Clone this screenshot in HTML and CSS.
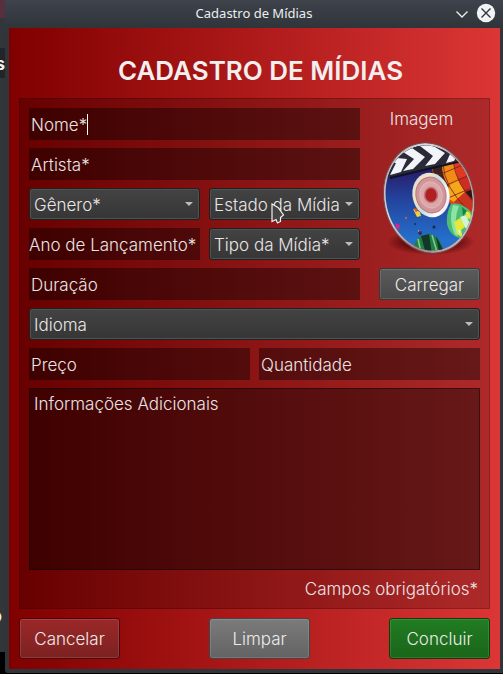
FILE: index.html
```html
<!DOCTYPE html>
<html lang="pt">
<head>
<meta charset="utf-8">
<title>Cadastro de Mídias</title>
<link rel="stylesheet" href="styles.css">
</head>
<body>
<div class="desktop" aria-hidden="true">
  <span class="behind behind-tab">s</span>
  <span class="behind behind-letter">o</span>
</div>
<div class="window">
  <header class="titlebar">
    <span class="caption">Cadastro de Mídias</span>
    <div class="window-controls">
      <button type="button" class="control" aria-label="Minimizar">
        <svg width="14" height="20" viewBox="0 0 14 20"><path d="M1.500 8.500L7 14L12.500 8.500" fill="none" stroke="#eceef0" stroke-width="1.300"/></svg>
      </button>
      <button type="button" class="control" aria-label="Fechar">
        <svg width="20" height="20" viewBox="0 0 20 20"><circle cx="10" cy="10" r="9.200" fill="#f2f3f4"/><path d="M5.500 5.500L14.500 14.500M14.500 5.500L5.500 14.500" fill="none" stroke="#30353a" stroke-width="1.400"/></svg>
      </button>
    </div>
  </header>
  <form class="content">
    <h1>CADASTRO DE MÍDIAS</h1>
    <section class="panel">
      <div class="top">
        <div class="fields">
          <div class="wide name">
            <input class="field" type="text" placeholder="Nome*" aria-label="Nome">
            <span class="caret"></span>
          </div>
          <input class="field wide" type="text" placeholder="Artista*" aria-label="Artista">
          <div class="combo"><select aria-label="Gênero"><option>Gênero*</option></select></div>
          <div class="combo">
            <select aria-label="Estado da Mídia"><option>Estado da Mídia*</option></select>
            <svg class="pointer" width="14" height="22" viewBox="0 0 14 22"><path d="M1 1V18.500L5 16.500L6.500 20L9.500 18.500V14.500L12.500 12L7 4.500Z" fill="#454545" stroke="#f0f0f0" stroke-width="1.200"/></svg>
          </div>
          <input class="field flush" type="text" placeholder="Ano de Lançamento*" aria-label="Ano de Lançamento">
          <div class="combo"><select aria-label="Tipo da Mídia"><option>Tipo da Mídia*</option></select></div>
          <input class="field wide" type="text" placeholder="Duração" aria-label="Duração">
        </div>
        <div class="cover">
          <span class="cover-label">Imagem</span>
          <svg class="disc" width="104" height="120" viewBox="0 0 104 120" role="img" aria-label="Disco">
            <defs>
              <linearGradient id="sky" x1="0" y1="0" x2="0" y2="1"><stop offset=".25" stop-color="#281a66"/><stop offset=".5" stop-color="#23429b"/><stop offset=".85" stop-color="#2470cc"/></linearGradient>
              <linearGradient id="rim" x1="0" y1="0" x2="1" y2="1"><stop offset="0" stop-color="#9b8a8e"/><stop offset=".3" stop-color="#ddd"/><stop offset=".6" stop-color="#a98388"/><stop offset="1" stop-color="#e5d5d5"/></linearGradient>
              <linearGradient id="hub" x1="0" y1="0" x2="1" y2="1"><stop offset="0" stop-color="#d5d5e5"/><stop offset=".3" stop-color="#f0e5c0"/><stop offset=".5" stop-color="#c3dde0"/><stop offset=".75" stop-color="#fff"/><stop offset="1" stop-color="#c7c6d4"/></linearGradient>
              <radialGradient id="shade"><stop offset=".5" stop-color="#400" stop-opacity=".8"/><stop offset="1" stop-color="#400" stop-opacity="0"/></radialGradient>
              <clipPath id="face"><ellipse cx="51" cy="60" rx="43" ry="53" transform="rotate(-12 51 60)"/></clipPath>
            </defs>
            <ellipse cx="53" cy="104" rx="44" ry="13" fill="url(#shade)"/>
            <ellipse cx="51" cy="60" rx="45" ry="55.500" transform="rotate(-12 51 60)" fill="url(#rim)" stroke="#76494d" stroke-width="1"/>
            <g clip-path="url(#face)">
              <path d="M0 0H104V120H0Z" fill="url(#sky)"/>
              <path d="M53 28L84 20L104 60V77Q82 74 68 62Q58 48 53 28Z" fill="#e34a1c"/>
              <path d="M54 28L64 26Q64 40 71 48L66 53Q56 42 54 28Z" fill="#3b2020"/>
              <path d="M64 26L75 23L80 41L71 48Q64 38 64 26Z" fill="#f28a16"/>
              <path d="M75 23L84 20L94 36L80 41Z" fill="#df3920"/>
              <path d="M71 48L80 41L87 54L76 64L68 59Z" fill="#f5a71b"/>
              <path d="M80 41L94 36L100 52L87 54Z" fill="#cc2c21"/>
              <path d="M87 54L100 49V65L91 60Z" fill="#231818"/>
              <path d="M76 64L87 54L99 66L98 74L84 70Z" fill="#c93320"/>
              <path d="M65 26Q66 49 90 72M75 23Q78 47 99 68M56 39L87 26M62 50L94 36M70 60L98 48" fill="none" stroke="#762017" stroke-width=".8"/>
              <path d="M73 66Q84 63 94 75Q97 89 85 101Q72 99 69 86Q68 75 73 66Z" fill="#4cbd72"/>
              <path d="M75 67Q70 82 77 97L80 98Q75 82 81 68Z" fill="#8be3a5"/>
              <path d="M76 84L82 80L88 88L83 92L85 100L79 96ZM86 71L92 75L94 82L89 80Z" fill="#e2e93c"/>
              <path d="M82 79L88 77L92 86L88 91ZM79 91L83 93L82 97Z" fill="#d3f4d4"/>
              <path d="M84 69L89 73L85 78ZM89 90L94 83L91 96Z" fill="#16824b"/>
              <path d="M35 112Q37 97 51 96Q63 98 65 113Z" fill="#1f813f"/>
              <path d="M43 98L48 116H54L51 96ZM58 98L61 114L65 111Z" fill="#123829"/>
              <path d="M40 101L43 114M54 97L59 114" stroke="#8ac798" stroke-width="1.500"/>
              <path d="M35 71L42 74L43 78L39 79ZM40 92L43 94L41 97Z" fill="#f1d23a"/>
              <path d="M36 70L40 71L38 75Z" fill="#df5a27"/>
              <path d="M17 85L22 87L21 92L18 90Z" fill="#c92c8d"/>
              <circle cx="28" cy="80" r="1.200" fill="#bd546d"/><circle cx="37" cy="86" r="1" fill="#142c6b"/><circle cx="42" cy="95" r="2" fill="#412066"/><circle cx="56" cy="89" r="1.500" fill="#152654"/><circle cx="52" cy="78" r="1" fill="#9bc7e7"/>
              <path d="M0 0H104V17L84 22L12 39L0 42Z" fill="#2b2b38"/>
              <path d="M14 25L19 20L29 21L23 34L12 37L18 25Z" fill="#f2f4fa"/>
              <path d="M25 14L34 10L47 19L35 31L25 33L36 21Z" fill="#f2f4fa"/>
              <path d="M42 8L52 6L67 15L57 26L47 28L55 18Z" fill="#f2f4fa"/>
              <path d="M61 5L67 8L80 16L76 23L68 25L72 16Z" fill="#f2f4fa"/>
              <path d="M12 40L84 23" stroke="#111126" stroke-width="2"/>
            </g>
            <ellipse cx="53" cy="57" rx="18.500" ry="22.500" transform="rotate(-12 53 57)" fill="url(#hub)"/>
            <ellipse cx="53" cy="57" rx="15" ry="18" transform="rotate(-12 53 57)" fill="#d1969a" stroke="#bd777e" stroke-width="1"/>
            <ellipse cx="53" cy="57" rx="11" ry="13" transform="rotate(-12 53 57)" fill="#daa7aa" stroke="#e3b9bb" stroke-width="1"/>
            <ellipse cx="53" cy="57" rx="6.500" ry="7.500" fill="#af2020" stroke="#c5737b" stroke-width="1.500"/>
          </svg>
          <button type="button" class="btn load">Carregar</button>
        </div>
      </div>
      <div class="combo"><select aria-label="Idioma"><option>Idioma</option></select></div>
      <div class="pair">
        <input class="field" type="text" placeholder="Preço" aria-label="Preço">
        <input class="field" type="text" placeholder="Quantidade" aria-label="Quantidade">
      </div>
      <textarea class="notes" placeholder="Informações Adicionais" aria-label="Informações Adicionais"></textarea>
      <p class="required">Campos obrigatórios*</p>
    </section>
    <div class="actions">
      <button type="button" class="btn cancel">Cancelar</button>
      <button type="button" class="btn clear">Limpar</button>
      <button type="button" class="btn finish">Concluir</button>
    </div>
  </form>
</div>
</body>
</html>
```

FILE: styles.css
```css
* { box-sizing: border-box; }

body {
  display: flex;
  min-height: 100vh;
  margin: 0;
  background: #000;
  color: #e9e5e5;
  font: 300 17px/20px Inter, "Liberation Sans", sans-serif;
}

/* Sliver of the application behind the dialog */
.desktop {
  position: relative;
  flex: 0 0 5px;
  overflow: hidden;
  background: linear-gradient(#57303f 18px, #31363b 18px 48px, #222528 48px 78px, #31363b 78px 652px, #000 652px);
}
.behind {
  position: absolute;
  right: 0;
  color: #f2f2f2;
  font-weight: 700;
}
.behind-tab { top: 54px; }
.behind-letter { top: 606px; right: 3px; }

.window {
  flex: 1;
  min-width: 0;
  display: flex;
  flex-direction: column;
  margin-bottom: 1px;
  padding: 0 3px 4px 4px;
  border-radius: 0 0 0 3px;
  background: #2f353a;
}
.titlebar {
  position: relative;
  display: flex;
  align-items: center;
  justify-content: center;
  height: 28px;
  margin: 0 -3px 0 -4px;
  background: linear-gradient(#3e434c, #2f3539);
}
.caption {
  padding-bottom: 2px;
  color: #eceef0;
  font: 13px/18px "Noto Sans", sans-serif;
}
.window-controls {
  position: absolute;
  top: 3px;
  right: 7px;
  display: flex;
  gap: 7px;
}
.control {
  display: flex;
  padding: 0;
  border: 0;
  background: none;
}

.content {
  flex: 1;
  display: flex;
  flex-direction: column;
  padding: 0 10px 10px;
  background: linear-gradient(90deg, #800000, #b01b1b 52%, #dc3636);
}
h1 {
  margin: 0;
  padding: 28px 0 12px 12px;
  color: #f2efef;
  font-size: 26px;
  line-height: 30px;
  font-weight: 600;
  text-align: center;
}
.panel {
  flex: 1;
  display: flex;
  flex-direction: column;
  gap: 8px;
  padding: 9px 9px 0;
  border: 1px solid rgba(0, 0, 0, .2);
  background: rgba(0, 0, 0, .2);
}
.top { display: flex; gap: 19px; }
.fields {
  flex: 1;
  min-width: 0;
  display: grid;
  grid-template-columns: 17fr 15fr;
  gap: 8px 9px;
}
.wide { grid-column: 1 / -1; }
.name { position: relative; }
.caret {
  position: absolute;
  top: 6px;
  left: 58px;
  width: 1px;
  height: 21px;
  background: #fff;
}

.field,
.notes,
select {
  display: block;
  width: 100%;
  min-width: 0;
  margin: 0;
  color: inherit;
  font: inherit;
  outline: 0;
}
.field {
  height: 32px;
  padding: 2px 2px 0;
  border: 0;
  background: rgba(0, 0, 0, .4);
}
.flush { padding-left: 0; padding-right: 0; }
::placeholder { color: inherit; opacity: 1; }

.combo { position: relative; min-width: 0; }
.combo::after {
  content: "";
  position: absolute;
  top: 14px;
  right: 7px;
  border: 4px solid transparent;
  border-top: 4px solid #bbb;
  border-bottom: 0;
}
select {
  height: 32px;
  padding: 2px 20px 0 4px;
  border: 1px solid #202020;
  border-radius: 3px;
  background: linear-gradient(#434343, #363636);
  box-shadow: inset 0 0 0 1px #515151;
  appearance: none;
}
.pointer {
  position: absolute;
  top: 15px;
  left: 62px;
  pointer-events: none;
}

.cover {
  flex: 0 0 101px;
  display: flex;
  flex-direction: column;
  align-items: center;
}
.cover-label { padding-right: 16px; line-height: 22px; }
.disc { margin: 8px -2px 10px; }

.pair { display: grid; grid-template-columns: 1fr 1fr; gap: 9px; }
.notes {
  flex: 1 0 182px;
  padding: 5px 4px;
  border: 1px solid rgba(0, 0, 0, .4);
  background: rgba(0, 0, 0, .4);
  resize: none;
}
.required { margin: 0; padding: 1px 2px 9px; text-align: right; }

.actions {
  display: flex;
  justify-content: space-between;
  padding-top: 9px;
}
.btn {
  width: 101px;
  height: 41px;
  padding: 1px 0 0;
  border: 1px solid #444;
  border-radius: 3px;
  color: #eeeaea;
  font: inherit;
  box-shadow: inset 0 0 0 1px rgba(255, 255, 255, .12);
}
.load {
  height: 32px;
  border-color: #383838;
  background: linear-gradient(#5b5b5b, #484848);
}
.cancel { border-color: #4c0508; background: linear-gradient(#9b2828, #7c2121); }
.clear { margin-left: 10px; background: linear-gradient(#7b7b7b, #636363); }
.finish { border-color: #0b3e0b; background: linear-gradient(#217d21, #1a651a); }
```
